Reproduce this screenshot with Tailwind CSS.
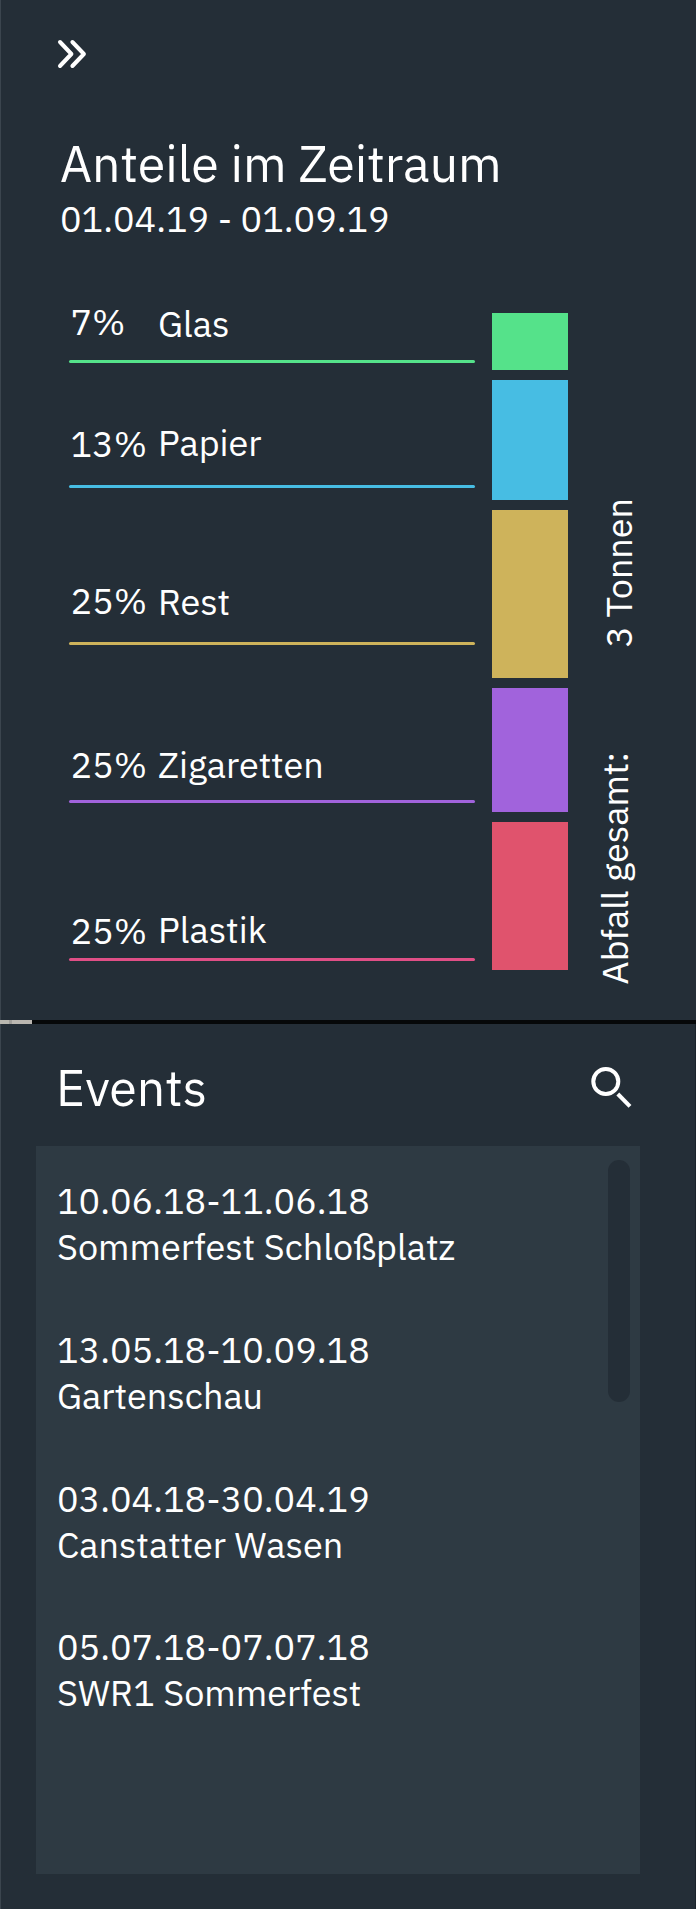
<!DOCTYPE html>
<html lang="de">
<head>
<meta charset="utf-8">
<title>Abfall Dashboard</title>
<script src="https://cdn.jsdelivr.net/npm/@tailwindcss/browser@4"></script>
</head>
<body class="w-[696px] h-[1909px] overflow-hidden bg-[#242e37] text-white text-[36px] leading-[47px] font-['IBM_Plex_Sans',Roboto,sans-serif]">

<!-- Shares panel -->
<section class="h-[1020px] border-l border-[#3b454e] flex flex-col">
  <header class="pl-[56px] pt-[39px]">
    <svg class="block w-[30px] h-[30px]" viewBox="0 0 30 30" fill="none" stroke="#fff" stroke-width="4" stroke-linecap="round" stroke-linejoin="round"><path d="M3 3 L14.4 15 L3 27"/><path d="M15.4 3 L26.9 15 L15.4 27"/></svg>
    <h1 class="mt-[62px] pl-[3px] text-[50px] leading-[65px]">Anteile im Zeitraum</h1>
    <p class="-mt-px pl-[3px]">01.04.19 - 01.09.19</p>
  </header>

  <div class="mt-12 pl-[67.5px] flex">
    <div class="w-[406.8px] flex flex-col">
      <div class="h-[70px] flex">
        <span class="w-[89.5px] pl-[2px] pt-[8px]">7%</span><span class="pt-[10px]">Glas</span>
      </div>
      <div class="h-[3px] rounded-full bg-[#55e28a]"></div>
      <div class="h-[122px] flex">
        <span class="w-[89.5px] pl-[2px] pt-[57px]">13%</span><span class="pt-[56px]">Papier</span>
      </div>
      <div class="h-[3px] rounded-full bg-[#47bde3]"></div>
      <div class="h-[154px] flex">
        <span class="w-[89.5px] pl-[2px] pt-[89px]">25%</span><span class="pt-[90px]">Rest</span>
      </div>
      <div class="h-[3px] rounded-full bg-[#ceb35b]"></div>
      <div class="h-[155px] flex">
        <span class="w-[89.5px] pl-[2px] pt-[96px]">25%</span><span class="pt-[96px]">Zigaretten</span>
      </div>
      <div class="h-[3px] rounded-full bg-[#a163dc]"></div>
      <div class="h-[155px] flex">
        <span class="w-[89.5px] pl-[2px] pt-[104px]">25%</span><span class="pt-[103px]">Plastik</span>
      </div>
      <div class="h-[3px] rounded-full bg-[#e04f86]"></div>
    </div>

    <div class="ml-[17.2px] mt-[23px] w-[75.5px] flex flex-col gap-[10px]">
      <div class="h-[57px] bg-[#55e28a]"></div>
      <div class="h-[120px] bg-[#47bde3]"></div>
      <div class="h-[168px] bg-[#ceb35b]"></div>
      <div class="h-[124px] bg-[#a163dc]"></div>
      <div class="h-[148px] bg-[#e0536d]"></div>
    </div>

    <div class="ml-[23px] w-[51px] h-[694px] flex flex-col justify-end">
      <span class="self-end [writing-mode:vertical-rl] rotate-180">3 Tonnen</span>
      <span class="mt-[104px] self-start [writing-mode:vertical-rl] rotate-180">Abfall gesamt:</span>
    </div>
  </div>
</section>

<div class="h-1 bg-[#060809] flex"><div class="w-[9px] bg-[#b9b7b0]"></div><div class="w-[3px] bg-[#a09e99]"></div><div class="w-5 bg-[#bab6b0]"></div></div>

<!-- Events panel -->
<section class="h-[885px] border-l border-l-[#3b454e] border-r border-r-[#1a232b] pl-[35px] pr-[55px]">
  <header class="h-[122px] flex justify-between pl-[20px] pr-[7px]">
    <h2 class="pt-[31px] text-[50px] leading-[65px]">Events</h2>
    <svg class="mt-[41px] w-[44px] h-[44px]" viewBox="0 0 44 44" fill="none" stroke="#fff" stroke-width="4"><circle cx="16.8" cy="16.5" r="12.5"/><path d="M28.8 29 L41 41.4"/></svg>
  </header>
  <div class="h-[728px] bg-[#2e3a43] flex justify-between pl-[21px] pr-[10px]">
    <ul class="pt-[31px] flex flex-col gap-[56px]">
      <li class="h-[93px]"><p class="h-[46px]">10.06.18-11.06.18</p><p>Sommerfest Schloßplatz</p></li>
      <li class="h-[93px]"><p class="h-[46px]">13.05.18-10.09.18</p><p>Gartenschau</p></li>
      <li class="h-[92px]"><p class="h-[46px]">03.04.18-30.04.19</p><p>Canstatter Wasen</p></li>
      <li class="h-[92px]"><p class="h-[46px]">05.07.18-07.07.18</p><p>SWR1 Sommerfest</p></li>
    </ul>
    <div class="mt-[14px] w-[22px] h-[242px] rounded-full bg-[#242e37]"></div>
  </div>
</section>
</body>
</html>
